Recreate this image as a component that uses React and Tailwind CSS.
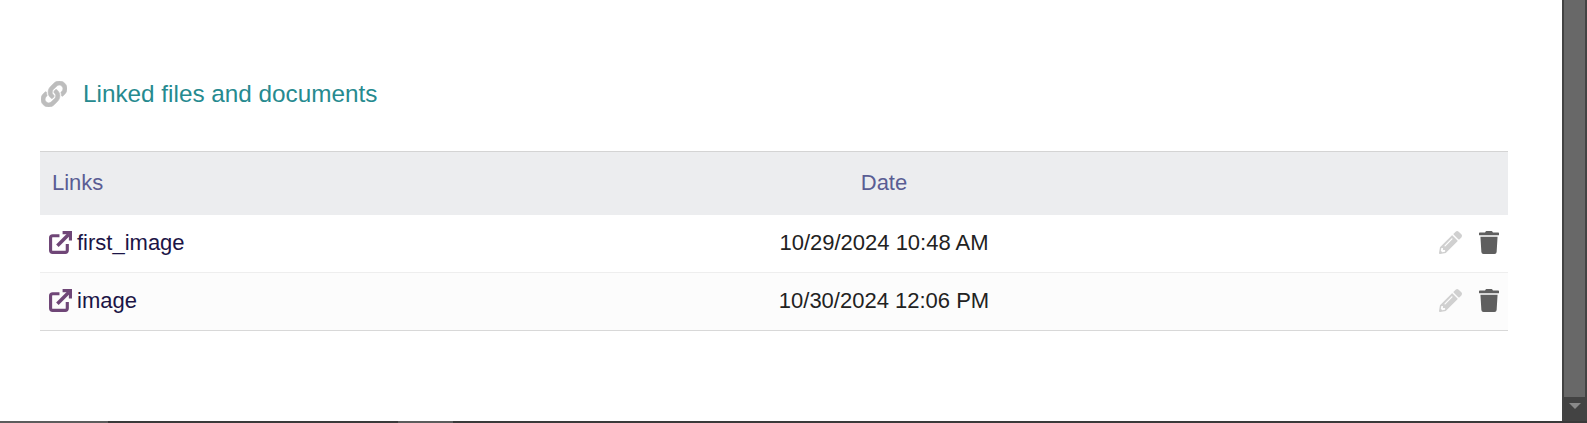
import { FaLink, FaPencilAlt, FaTrash } from "react-icons/fa";

const rows = [
  { name: "first_image", date: "10/29/2024 10:48 AM", bg: "bg-white", border: "border-[#eeeeee]" },
  { name: "image", date: "10/30/2024 12:06 PM", bg: "bg-[#fcfcfc]", border: "border-[#d8d8d8]" },
];

function ExternalIcon() {
  return (
    <svg viewBox="0 0 22 22" className="h-[23px] w-[23px] shrink-0 text-[#6f4677]" fill="none" stroke="currentColor">
      <path d="M10 4.5H3.5A2 2 0 0 0 1.5 6.5V18.5A2 2 0 0 0 3.5 20.5H15.5A2 2 0 0 0 17.5 18.5V12.5" strokeWidth="3" />
      <path d="M8 14L19 3" strokeWidth="3.4" />
      <path d="M13 1.5H20.5V9" strokeWidth="3" />
    </svg>
  );
}

export default function App() {
  return (
    <div className="relative flex h-[423px] w-[1587px] overflow-hidden bg-white font-['Liberation_Sans',Arial,sans-serif]">
      <main className="w-[1562px] pl-10 pr-[54px] pt-[79px]">
        <div className="flex h-[30px] items-center">
          <FaLink className="ml-[1px] h-[26px] w-[26px] text-[#bdbdbd]" stroke="currentColor" strokeWidth="12" />
          <h2 className="ml-[16px] text-[24.3px] font-normal leading-[30px] text-[#268a8f]">Linked files and documents</h2>
        </div>
        <div className="mt-[42px]">
          <div className="flex h-[64px] items-center border-t border-[#d4d4d4] bg-[#ecedef] pb-[2px] text-[22px] text-[#5a5d94]">
            <div className="w-[646px] pl-3">Links</div>
            <div className="w-[396px] text-center">Date</div>
          </div>
          {rows.map((r) => (
            <div key={r.name} className={`flex h-[58px] items-center border-b ${r.bg} ${r.border} pb-[2px] text-[22px]`}>
              <div className="flex w-[646px] items-center pl-[9px]">
                <ExternalIcon />
                <span className="ml-[5px] text-[#1b1446]">{r.name}</span>
              </div>
              <div className="w-[396px] text-center text-[#222222]">{r.date}</div>
              <div className="flex flex-1 items-center justify-end gap-[17px] pr-[9px]">
                <FaPencilAlt className="h-[23px] w-[23px] text-[#d0d0d0]" />
                <FaTrash className="h-[23px] w-[20px] text-[#5f5f5f]" />
              </div>
            </div>
          ))}
        </div>
      </main>
      <aside className="flex w-[25px] flex-col items-center bg-[#434343] px-[2px] pb-[2px]">
        <div className="h-[397px] w-full bg-[#686868]" />
        <div className="mt-[6px] h-0 w-0 border-x-[6px] border-t-[6px] border-x-transparent border-t-[#8a8a8a]" />
      </aside>
      <div className="absolute bottom-0 left-0 flex h-[2px] w-full bg-[#3a3a3a]">
        <div className="h-full w-[108px] bg-[#5c5c5c]" />
        <div className="ml-[290px] h-full w-[55px] bg-[#5c5c5c]" />
      </div>
    </div>
  );
}
